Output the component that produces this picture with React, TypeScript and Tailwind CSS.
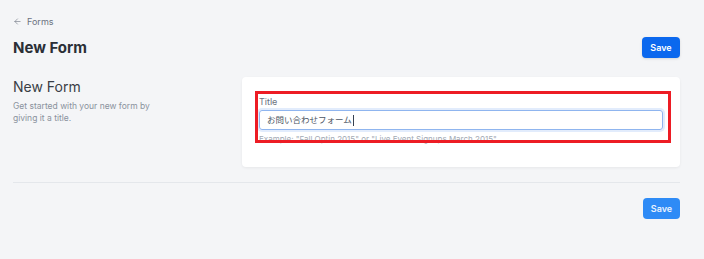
import { ArrowLeft } from 'lucide-react';

const font = "font-['Inter','Noto_Sans_CJK_JP',sans-serif]";

export default function App() {
  return (
    <div className={`${font} min-h-[259px] w-full bg-[#f4f5f7] pl-[13px] pr-[24px] pt-[16px] pb-[40px]`}>
      {/* Breadcrumb */}
      <div className="flex h-[10px] items-center gap-[5px] text-[9px] leading-none text-[#6b7280]">
        <ArrowLeft className="h-[9px] w-[9px]" strokeWidth={1.6} />
        <span>Forms</span>
      </div>

      {/* Header */}
      <div className="mt-[11px] flex h-[21px] items-center justify-between">
        <h1 className="text-[15px] font-bold leading-none text-[#2b2f36]">New Form</h1>
        <button className="h-[21px] w-[38px] rounded-[4px] bg-[#0b68ee] text-[9px] font-semibold text-white shadow-sm">
          Save
        </button>
      </div>

      {/* Section */}
      <div className="mt-[19px] flex">
        <div className="w-[229px] shrink-0 pt-[1px]">
          <h2 className="text-[14px] leading-[17px] text-[#3a3e45]">New Form</h2>
          <p className="mt-[5px] w-[140px] text-[8.5px] leading-[12px] text-[#8a929d]">
            Get started with your new form by giving it a title.
          </p>
        </div>

        <div className="relative h-[90px] flex-1 rounded-[4px] bg-white px-[17px] pt-[19px] shadow-[0_1px_3px_rgba(0,0,0,0.06)]">
          <label className="block text-[9px] leading-[12px] text-[#6b7280]">Title</label>
          <div className="mt-[2px] flex h-[20px] items-center rounded-[3px] border border-[#8fb5ef] px-[7px] text-[8.5px] text-[#4b5563] shadow-[0_0_0_2px_rgba(96,150,240,0.18)]">
            <span>お問い合わせフォーム</span>
            <span className="ml-[1px] h-[11px] w-px bg-[#374151]" />
          </div>
          <p className="mt-[4px] text-[8px] leading-[10px] text-[#a3aab4]">
            Example: "Fall Optin 2015" or "Live Event Signups March 2015"
          </p>

          {/* annotation box */}
          <div className="pointer-events-none absolute left-[13px] top-[14px] h-[52px] w-[416px] border-[3px] border-[#ed1c24]" />
        </div>
      </div>

      <div className="mt-[15px] h-px bg-[#e4e7eb]" />

      <div className="mt-[15px] flex justify-end">
        <button className="h-[21px] w-[37px] rounded-[4px] bg-[#2e8bf6] text-[9px] font-semibold text-white/90">
          Save
        </button>
      </div>
    </div>
  );
}
